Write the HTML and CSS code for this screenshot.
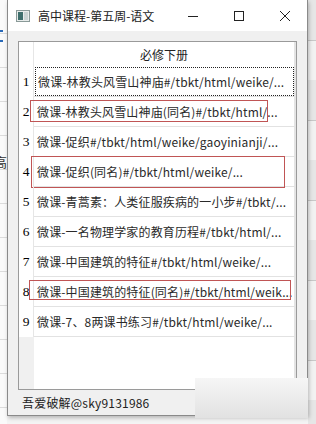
FILE: index.html
```html
<!DOCTYPE html>
<html lang="zh-CN">
<head>
    <meta charset="UTF-8">
    <title>高中课程-第五周-语文</title>
    <link rel="stylesheet" href="styles.css">
</head>
<body>
    <div class="desktop">
        <div class="behind-left">
            <span class="blue-mark"></span>
            <span class="gao">高</span>
        </div>
        <div class="window">
            <div class="titlebar">
                <svg class="app-icon" width="14" height="12" viewBox="0 0 14 12">
                    <rect x="0.5" y="0.5" width="13" height="11" fill="#e8eceb" stroke="#8a9a98"/>
                    <rect x="2" y="2" width="5" height="8" fill="#3e6f6c"/>
                    <rect x="8" y="2" width="4" height="8" fill="#c9d3d2"/>
                </svg>
                <span class="title">高中课程-第五周-语文</span>
                <div class="controls">
                    <svg width="12" height="12" viewBox="0 0 12 12"><line x1="1" y1="6.5" x2="11" y2="6.5" stroke="#222" stroke-width="1"/></svg>
                    <svg width="12" height="12" viewBox="0 0 12 12"><rect x="1.5" y="1.5" width="9" height="9" fill="none" stroke="#222" stroke-width="1"/></svg>
                    <svg width="12" height="12" viewBox="0 0 12 12"><path d="M1 1 L11 11 M11 1 L1 11" stroke="#222" stroke-width="1"/></svg>
                </div>
            </div>
            <div class="client">
                <div class="table">
                    <div class="head">
                        <div class="corner"></div>
                        <div class="col-head">必修下册</div>
                    </div>
                    <div class="row"><div class="num">1</div><div class="cell"><span class="focus">微课-林教头风雪山神庙#/tbkt/html/weike/...</span></div></div>
                    <div class="row"><div class="num">2</div><div class="cell">微课-林教头风雪山神庙(同名)#/tbkt/html/...</div><span class="mark mark-2"></span></div>
                    <div class="row"><div class="num">3</div><div class="cell">微课-促织#/tbkt/html/weike/gaoyinianji/...</div></div>
                    <div class="row"><div class="num">4</div><div class="cell">微课-促织(同名)#/tbkt/html/weike/...</div><span class="mark mark-4"></span></div>
                    <div class="row"><div class="num">5</div><div class="cell">微课-青蒿素：人类征服疾病的一小步#/tbkt/...</div></div>
                    <div class="row"><div class="num">6</div><div class="cell">微课-一名物理学家的教育历程#/tbkt/html/...</div></div>
                    <div class="row"><div class="num">7</div><div class="cell">微课-中国建筑的特征#/tbkt/html/weike/...</div></div>
                    <div class="row"><div class="num">8</div><div class="cell">微课-中国建筑的特征(同名)#/tbkt/html/weik...</div><span class="mark mark-8"></span></div>
                    <div class="row"><div class="num">9</div><div class="cell">微课-7、8两课书练习#/tbkt/html/weike/...</div></div>
                    <div class="empty">
                        <div class="empty-num"></div>
                        <div class="empty-cell"></div>
                    </div>
                </div>
            </div>
            <div class="footer">吾爱破解@sky9131986</div>
        </div>
        <div class="behind-right"></div>
        <div class="smudge"></div>
    </div>
</body>
</html>
```

FILE: styles.css
```css
body {
    margin: 0;
    background: #f4f4f4;
    font-family: "Noto Sans CJK SC", sans-serif;
    font-size: 12px;
    color: #000;
}
.desktop {
    position: relative;
    display: flex;
    width: 316px;
    height: 424px;
    overflow: hidden;
}
.behind-left {
    position: relative;
    width: 7px;
    background: repeating-linear-gradient(to bottom, #fafafa 0, #fafafa 33px, #dcdcdc 33px, #dcdcdc 34px);
}
.blue-mark {
    position: absolute;
    left: 0;
    top: 30px;
    width: 3px;
    height: 8px;
    border-top: 2px solid #2a6ab8;
    border-bottom: 2px solid #2a6ab8;
}
.gao {
    position: absolute;
    left: -6px;
    top: 152px;
    font-size: 13px;
    color: #333;
}
.window {
    width: 299px;
    height: 415px;
    border: 1px solid #8a8a8a;
    border-top: none;
    background: #f0f0f0;
    display: flex;
    flex-direction: column;
    box-shadow: 1px 2px 4px rgba(0,0,0,0.25);
    z-index: 1;
}
.titlebar {
    height: 31px;
    background: #fff;
    display: flex;
    align-items: center;
    padding-left: 8px;
}
.app-icon {
    margin-top: 1px;
}
.title {
    margin-left: 8px;
    font-size: 12px;
    color: #222;
}
.controls {
    margin-left: auto;
    display: flex;
    gap: 34px;
    padding-right: 16px;
}
.client {
    padding: 10px 10px 0 10px;
}
.table {
    height: 347px;
    border: 1px solid #9a9a9a;
    background: #fff;
    display: flex;
    flex-direction: column;
}
.head {
    display: flex;
    height: 25px;
}
.corner {
    width: 14px;
    border-right: 1px solid #e6e6e6;
}
.col-head {
    flex: 1;
    text-align: center;
    line-height: 25px;
    color: #222;
    border-right: 2px solid #e4e4e4;
}
.row {
    position: relative;
    display: flex;
    height: 30px;
}
.num {
    width: 14px;
    border-right: 1px solid #e6e6e6;
    text-align: center;
    line-height: 30px;
    font-family: "Liberation Serif", serif;
    font-size: 13.5px;
}
.cell {
    flex: 1;
    min-width: 0;
    height: 29px;
    border-bottom: 1px solid #e2e2e2;
    border-right: 2px solid #e4e4e4;
    padding-left: 3px;
    line-height: 29px;
    letter-spacing: 0.15px;
    white-space: nowrap;
    overflow: hidden;
    color: #2a2a2a;
}
.focus {
    display: block;
    margin-left: -2px;
    padding-left: 2px;
    height: 27px;
    line-height: 27px;
    border: 1px dotted #222;
}
.mark {
    position: absolute;
    border: 1px solid #c05555;
}
.mark-2 {
    left: 11px;
    top: 3px;
    width: 236px;
    height: 20px;
}
.mark-4 {
    left: 12px;
    top: -1px;
    width: 252px;
    height: 30px;
}
.mark-8 {
    left: 10px;
    top: 3px;
    width: 260px;
    height: 18px;
}
.empty {
    flex: 1;
    display: flex;
}
.empty-num {
    width: 15px;
    background: #f0f0f0;
}
.empty-cell {
    flex: 1;
    border-right: 2px solid #e4e4e4;
}
.footer {
    padding: 4px 0 0 14px;
    letter-spacing: 0.2px;
    color: #222;
}
.behind-right {
    flex: 1;
    background: repeating-linear-gradient(to bottom, #e6e6e6 0, #e6e6e6 40px, #c8c8c8 40px, #c8c8c8 41px, #f2f2f2 41px, #f2f2f2 80px);
}
.smudge {
    position: absolute;
    left: 195px;
    top: 378px;
    width: 113px;
    height: 40px;
    background: linear-gradient(to bottom, #f6f6f6, #e2e2e2);
    z-index: 2;
}
```
